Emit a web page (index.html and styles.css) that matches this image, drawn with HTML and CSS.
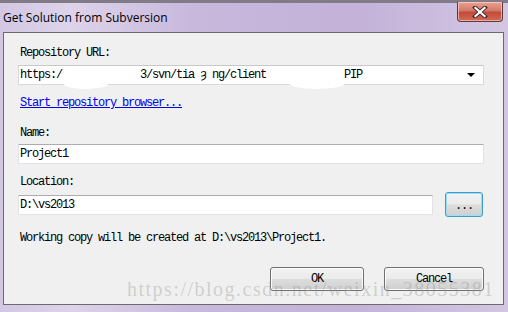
FILE: index.html
```html
<!DOCTYPE html>
<html lang="en">
    <head>
        <title>Get Solution from Subversion</title>
        <link rel="stylesheet" href="styles.css">
    </head>
    <body>
        <div class="window">
            <div class="titlebar">
                <span class="title">Get Solution from Subversion</span>
                <div class="close">
                    <svg width="16" height="12" viewBox="0 0 16 12">
                        <path d="M3 1.5 L13 10.5 M13 1.5 L3 10.5" stroke="#4a2a2a" stroke-width="4" stroke-linecap="square"/>
                        <path d="M3.5 2 L12.5 10 M12.5 2 L3.5 10" stroke="#ffffff" stroke-width="2.2" stroke-linecap="square"/>
                    </svg>
                </div>
            </div>

            <div class="client">
                <div class="label label-url">Repository URL:</div>
                <div class="field combo">
                    <span class="field-text">https:/             3/svn/tia ȝ ng/client             PIP</span>
                    <span class="arrow"></span>
                </div>
                <span class="blob blob-a"></span>
                <span class="blob blob-b"></span>

                <a class="link" href="#">Start repository browser...</a>

                <div class="label label-name">Name:</div>
                <div class="field">
                    <span class="field-text">Project1</span>
                </div>

                <div class="label label-location">Location:</div>
                <div class="location-row">
                    <div class="field field-location">
                        <span class="field-text">D:\vs2013</span>
                    </div>
                    <button class="btn btn-browse">...</button>
                </div>

                <div class="label label-info">Working copy will be created at D:\vs2013\Project1.</div>

                <div class="actions">
                    <button class="btn btn-ok">OK</button>
                    <button class="btn btn-cancel">Cancel</button>
                </div>

                <div class="watermark">https://blog.csdn.net/weixin_38055381</div>
            </div>
        </div>
    </body>
</html>
```

FILE: styles.css
```css
body {
    margin: 0;
}

/* Window frame */
.window {
    width: 508px;
    height: 312px;
    display: flex;
    flex-direction: column;
    background: linear-gradient(to right, #d3c7e3 0%, #ddd3ea 14%, #c8b8dc 38%, #c4b2d9 70%, #d2c6e2 100%);
    overflow: hidden;
}

.titlebar {
    height: 29px;
    border-top: 3px solid #807b86;
    display: flex;
    justify-content: space-between;
    align-items: flex-start;
}

.title {
    font-family: "Open Sans", "Noto Sans", sans-serif;
    font-size: 12px;
    color: #000;
    margin: 6px 0 0 3px;
    line-height: 17px;
}

.close {
    width: 44px;
    height: 19px;
    margin: -1px 5px 0 0;
    border: 1px solid #5a3a3a;
    border-top: none;
    border-radius: 0 0 4px 4px;
    background: linear-gradient(#e8a491 0%, #d47867 45%, #c24c3a 55%, #d06a55 100%);
    box-shadow: inset 0 0 0 1px rgba(255, 220, 210, 0.6);
    display: flex;
    align-items: center;
    justify-content: center;
}

/* Client area */
.client {
    position: relative;
    flex: 1;
    margin: 0 4px 7px 3px;
    padding: 0 20px 0 14px;
    border: 1px solid #6b6b6b;
    background: #f0f0f0;
    display: flex;
    flex-direction: column;
    align-items: flex-start;
}

.label,
.field-text,
.link,
.btn {
    font-family: "Liberation Mono", "DejaVu Sans Mono", monospace;
    font-size: 12px;
    letter-spacing: -1.2px;
    color: #000;
}

.label {
    line-height: 14px;
    padding-left: 2px;
}

.label-url {
    margin-top: 13px;
}

.label-name {
    margin-top: 16px;
}

.label-location {
    margin-top: 11px;
}

.label-info {
    margin-top: 15px;
}

.field {
    box-sizing: border-box;
    width: 466px;
    height: 20px;
    margin-top: 4px;
    padding-left: 1px;
    background: #fff;
    border: 1px solid #e2e3ea;
    border-top-color: #abadb3;
    display: flex;
    align-items: center;
}

.field-text {
    white-space: pre;
    line-height: 14px;
}

.combo {
    margin-top: 5px;
    border-color: #d9d9d9;
    border-top-color: #c8c8c8;
    justify-content: space-between;
}

.arrow {
    width: 0;
    height: 0;
    margin-right: 8px;
    border-left: 4px solid transparent;
    border-right: 4px solid transparent;
    border-top: 4px solid #000;
}

/* redaction smudges */
.blob {
    position: absolute;
    background: #fff;
    border-radius: 50%;
}

.blob-a {
    left: 60px;
    top: 46px;
    width: 44px;
    height: 10px;
}

.blob-b {
    left: 285px;
    top: 44px;
    width: 56px;
    height: 12px;
}

.link {
    margin-top: 11px;
    padding-left: 2px;
    line-height: 14px;
    color: #0000ee;
}

.location-row {
    margin-top: 3px;
    width: 465px;
    height: 24px;
    display: flex;
    justify-content: space-between;
    align-items: center;
}

.field-location {
    width: 415px;
    margin-top: 1px;
}

/* Buttons */
.btn {
    box-sizing: border-box;
    height: 24px;
    padding: 0;
    border: 1px solid #707070;
    border-radius: 3px;
    background: linear-gradient(#f2f2f2 0%, #ebebeb 48%, #dddddd 52%, #cfcfcf 100%);
    box-shadow: inset 0 0 0 1px #fbfbfb;
}

.btn-browse {
    width: 38px;
    height: 25px;
    border-color: #3c9ccf;
    box-shadow: inset 0 0 0 1px #9fdcf6;
    padding-top: 3px;
}

.actions {
    margin-top: 22px;
    width: 466px;
    display: flex;
    justify-content: flex-end;
    gap: 20px;
}

.btn-ok {
    width: 94px;
}

.btn-cancel {
    width: 100px;
}

.watermark {
    position: absolute;
    left: 123px;
    top: 245px;
    font-family: "Liberation Serif", serif;
    font-size: 20px;
    letter-spacing: 1.5px;
    color: rgba(150, 150, 150, 0.38);
    white-space: nowrap;
}
```
